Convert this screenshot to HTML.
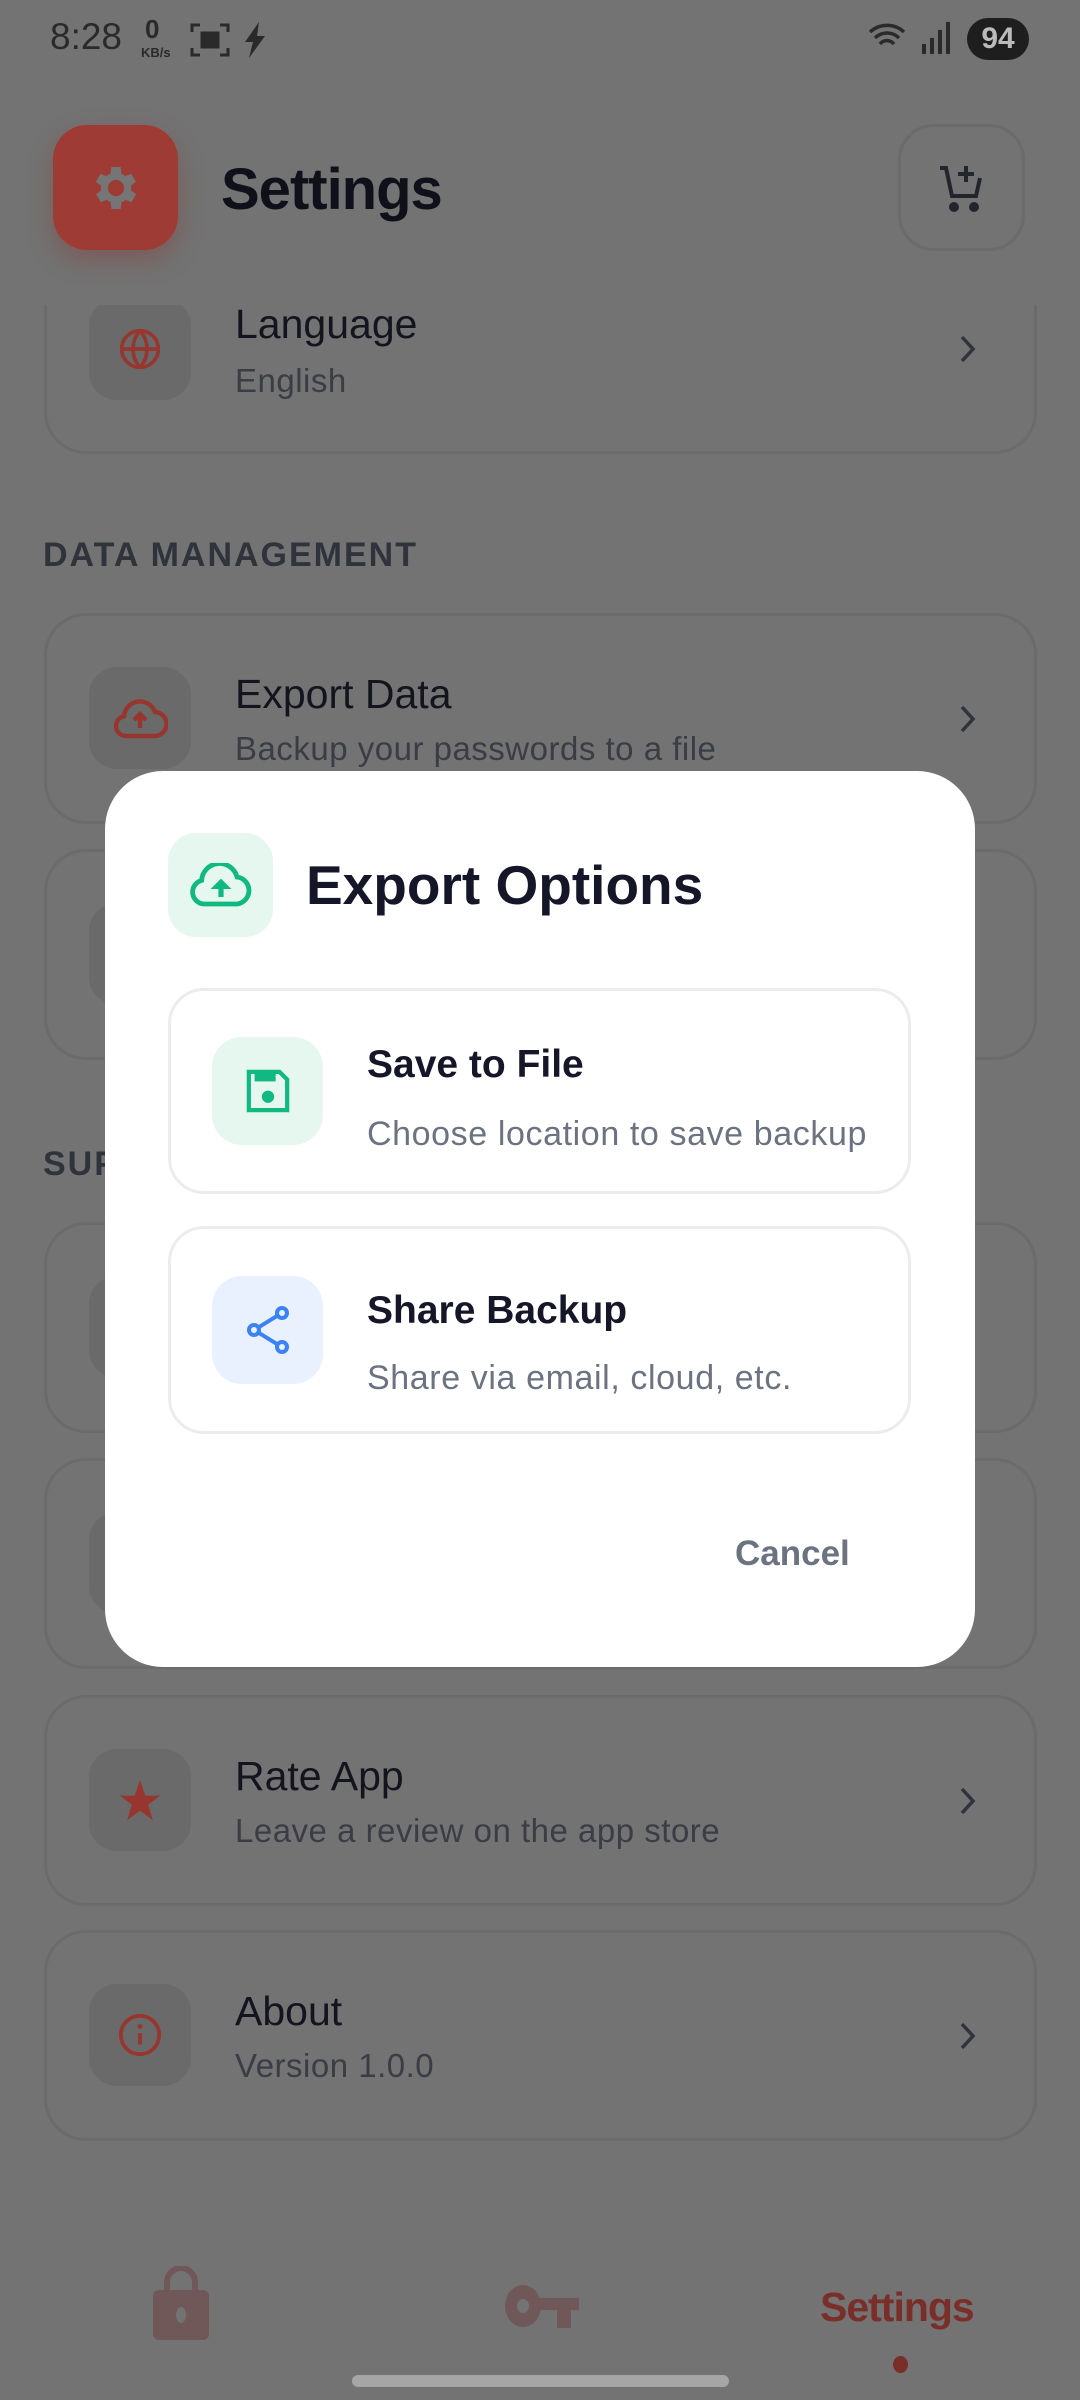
<!DOCTYPE html>
<html><head><meta charset="utf-8"><style>
*{margin:0;padding:0;box-sizing:border-box}
body{width:1080px;height:2400px;background:#737373;font-family:"Liberation Sans",sans-serif;position:relative;overflow:hidden}
.abs{position:absolute}
.card{position:absolute;left:44px;width:993px;height:211px;border:3px solid #6b6b6b;border-radius:42px}
.ib{position:absolute;left:42px;top:51px;width:102px;height:102px;border-radius:28px;background:#6a6a6a;display:flex;align-items:center;justify-content:center}
.t{position:absolute;left:188px;top:55px;font-size:41px;color:#14141e}
.s{position:absolute;left:188px;top:114px;font-size:33px;color:#3a3d45;letter-spacing:0.5px}
.chev{position:absolute;right:56px;top:88px}
.sec{position:absolute;left:43px;font-size:34px;font-weight:bold;color:#2f333b;letter-spacing:2px}
</style></head><body>
<!-- status bar -->
<div class="abs" style="left:50px;top:16px;font-size:37px;color:#2a2a2a">8:28</div>
<div class="abs" style="left:145px;top:14px;font-size:26px;color:#2a2a2a;font-weight:bold">0</div>
<div class="abs" style="left:141px;top:45px;font-size:13px;color:#2a2a2a;font-weight:bold">KB/s</div>
<svg class="abs" style="left:190px;top:22px" width="40" height="36" viewBox="0 0 40 36" fill="none" stroke="#2a2a2a" stroke-width="3"><path d="M2 10V3h8M30 3h8v7M38 26v7h-8M10 33H2v-7"/><rect x="12" y="11" width="16" height="14" fill="#2a2a2a"/></svg>
<svg class="abs" style="left:243px;top:22px" width="24" height="36" viewBox="0 0 24 36"><path d="M16 0L2 20h8L6 36 22 14h-8z" fill="#2a2a2a"/></svg>
<svg class="abs" style="left:868px;top:20px" width="40" height="36" viewBox="0 0 40 36" fill="none" stroke="#2a2a2a" stroke-width="3.5"><path d="M2 12a25 25 0 0 1 34 0M7 18a17 17 0 0 1 24 0M12 24a9 9 0 0 1 14 0"/></svg>
<svg class="abs" style="left:920px;top:22px" width="32" height="32" viewBox="0 0 32 32" fill="#2a2a2a"><rect x="2" y="22" width="4" height="10"/><rect x="10" y="16" width="4" height="16"/><rect x="18" y="8" width="4" height="24"/><rect x="26" y="0" width="4" height="32"/></svg>
<div class="abs" style="left:967px;top:18px;width:62px;height:42px;border-radius:21px;background:#1e1e1e;color:#bbb;font-size:30px;font-weight:bold;text-align:center;line-height:42px">94</div>

<!-- language card (behind header) -->
<div class="card" style="top:243px"><div class="ib" style="top:52px"><svg width="44" height="44" viewBox="0 0 24 24" fill="none" stroke="#96362f" stroke-width="2"><circle cx="12" cy="12" r="10"/><path d="M2 12h20M12 2a15 15 0 0 1 0 20M12 2a15 15 0 0 0 0 20"/></svg></div>
<div class="t" style="top:55px">Language</div><div class="s" style="top:116px">English</div>
<svg class="chev" width="20" height="30" viewBox="0 0 20 30" fill="none" stroke="#2f333b" stroke-width="3.5"><path d="M4 3l11 12L4 27"/></svg></div>

<!-- header -->
<div class="abs" style="left:0;top:80px;width:1080px;height:225px;background:#737373"></div>
<div class="abs" style="left:53px;top:125px;width:125px;height:125px;border-radius:34px;background:#9e3b35;box-shadow:0 10px 24px rgba(140,45,40,.35);display:flex;align-items:center;justify-content:center">
<svg width="56" height="56" viewBox="0 0 24 24" fill="#757575"><path d="M19.4 13a7.5 7.5 0 0 0 0-2l2.1-1.6-2-3.5-2.5 1a7 7 0 0 0-1.7-1L15 3h-4l-.4 2.9a7 7 0 0 0-1.7 1l-2.5-1-2 3.5L6.6 11a7.5 7.5 0 0 0 0 2l-2.1 1.6 2 3.5 2.5-1a7 7 0 0 0 1.7 1L11 21h4l.4-2.9a7 7 0 0 0 1.7-1l2.5 1 2-3.5zM13 15.5a3.5 3.5 0 1 1 0-7 3.5 3.5 0 0 1 0 7z" transform="translate(-1 0)"/></svg></div>
<div class="abs" style="left:221px;top:156px;font-size:58px;font-weight:bold;color:#0f1019;letter-spacing:-1px">Settings</div>
<div class="abs" style="left:898px;top:124px;width:127px;height:127px;border-radius:36px;border:3px solid #6b6b6b;display:flex;align-items:center;justify-content:center">
<svg width="48" height="52" viewBox="0 0 48 52" fill="none" stroke="#22252c" stroke-width="4"><path d="M2 6h6l6 28h24l4-18"/><path d="M28 4v16M20 12h16"/><circle cx="16" cy="45" r="3" fill="#22252c"/><circle cx="36" cy="45" r="3" fill="#22252c"/></svg></div>

<div class="sec" style="top:536px">DATA MANAGEMENT</div>
<div class="card" style="top:613px"><div class="ib"><svg width="56" height="44" viewBox="0 0 28 22" fill="none" stroke="#96362f" stroke-width="2.2"><path d="M7 20a5 5 0 0 1-1-9.9A8 8 0 0 1 21.5 8 6 6 0 0 1 21 20z"/><path d="M14 16v-6M11 12l3-3 3 3" /></svg></div>
<div class="t">Export Data</div><div class="s">Backup your passwords to a file</div>
<svg class="chev" width="20" height="30" viewBox="0 0 20 30" fill="none" stroke="#2f333b" stroke-width="3.5"><path d="M4 3l11 12L4 27"/></svg></div>
<div class="card" style="top:849px"><div class="ib"></div><div class="t">Import Data</div><div class="s">Restore from a backup file</div></div>
<div class="sec" style="top:1145px">SUPPORT</div>
<div class="card" style="top:1222px"><div class="ib"></div></div>
<div class="card" style="top:1458px"><div class="ib"></div></div>
<div class="card" style="top:1695px"><div class="ib"><svg width="44" height="44" viewBox="0 0 24 24" fill="#96362f"><path d="M12 1l2.9 8.6H23l-6.6 5 2.6 8.4L12 17.8 5 23l2.6-8.4L1 9.6h8.1z"/></svg></div>
<div class="t">Rate App</div><div class="s">Leave a review on the app store</div>
<svg class="chev" width="20" height="30" viewBox="0 0 20 30" fill="none" stroke="#2f333b" stroke-width="3.5"><path d="M4 3l11 12L4 27"/></svg></div>
<div class="card" style="top:1930px"><div class="ib"><svg width="46" height="46" viewBox="0 0 24 24" fill="none" stroke="#96362f" stroke-width="2"><circle cx="12" cy="12" r="10"/><path d="M12 11v6"/><circle cx="12" cy="7.5" r="1.2" fill="#96362f" stroke="none"/></svg></div>
<div class="t">About</div><div class="s">Version 1.0.0</div>
<svg class="chev" width="20" height="30" viewBox="0 0 20 30" fill="none" stroke="#2f333b" stroke-width="3.5"><path d="M4 3l11 12L4 27"/></svg></div>

<!-- bottom nav -->
<svg class="abs" style="left:153px;top:2266px" width="56" height="74" viewBox="0 0 56 74"><path d="M14 26V16a14 14 0 0 1 28 0v10" fill="none" stroke="#705858" stroke-width="6"/><rect x="0" y="24" width="56" height="50" rx="6" fill="#705858"/><ellipse cx="28" cy="49" rx="5" ry="8" fill="#737373"/></svg>
<svg class="abs" style="left:505px;top:2284px" width="74" height="44" viewBox="0 0 74 44"><ellipse cx="18" cy="22" rx="18" ry="21" fill="#705858"/><ellipse cx="18" cy="22" rx="6" ry="7" fill="#737373"/><rect x="30" y="14" width="44" height="12" fill="#705858"/><rect x="52" y="20" width="14" height="24" fill="#705858"/></svg>
<div class="abs" style="left:820px;top:2284px;font-size:41px;font-weight:bold;color:#7a2e29;letter-spacing:-1px">Settings</div>
<div class="abs" style="left:893px;top:2356px;width:15px;height:17px;border-radius:50%;background:#7a2e29"></div>
<div class="abs" style="left:352px;top:2375px;width:377px;height:12px;border-radius:6px;background:#a6a6a6"></div>

<!-- dialog -->
<div class="abs" style="left:105px;top:771px;width:870px;height:896px;background:#fff;border-radius:58px">
<div class="abs" style="left:63px;top:62px;width:105px;height:104px;border-radius:28px;background:#e6f7f0;display:flex;align-items:center;justify-content:center">
<svg width="66" height="44" viewBox="0 0 33 22" fill="none" stroke="#10b981" stroke-width="2.4"><path d="M8 20.5a6 6 0 0 1-1.2-11.8A9 9 0 0 1 24.5 7a6.8 6.8 0 0 1 0 13.5z"/><path d="M16.5 17v-6" stroke-width="2.6"/><path d="M12.5 12.5l4-4 4 4z" fill="#10b981" stroke-width="1"/></svg></div>
<div class="abs" style="left:201px;top:82px;font-size:55px;font-weight:bold;color:#161629">Export Options</div>
<div class="abs" style="left:63px;top:217px;width:743px;height:206px;border:3px solid #ececef;border-radius:36px">
<div class="abs" style="left:41px;top:46px;width:111px;height:108px;border-radius:30px;background:#e6f7f0;display:flex;align-items:center;justify-content:center">
<svg width="46" height="46" viewBox="0 0 24 24" fill="none" stroke="#10b981" stroke-width="2.2"><path d="M2 2h16l4 4v16H2z"/><rect x="5" y="3" width="11" height="4" fill="#10b981" stroke="none"/><circle cx="12" cy="15" r="3.2" fill="#10b981" stroke="none"/></svg></div>
<div class="abs" style="left:196px;top:52px;font-size:39px;font-weight:bold;color:#161629">Save to File</div>
<div class="abs" style="left:196px;top:124px;font-size:34px;color:#6b7280;letter-spacing:0.6px">Choose location to save backup</div></div>
<div class="abs" style="left:63px;top:455px;width:743px;height:208px;border:3px solid #ececef;border-radius:36px">
<div class="abs" style="left:41px;top:47px;width:111px;height:108px;border-radius:30px;background:#eaf1fe;display:flex;align-items:center;justify-content:center">
<svg width="48" height="50" viewBox="0 0 24 25" fill="none" stroke="#3b82f6" stroke-width="2"><circle cx="19" cy="4" r="2.5"/><circle cx="5" cy="12.5" r="2.5"/><circle cx="19" cy="21" r="2.5"/><path d="M7.2 11.2l9.6-5.9M7.2 13.8l9.6 5.9"/></svg></div>
<div class="abs" style="left:196px;top:60px;font-size:39px;font-weight:bold;color:#161629">Share Backup</div>
<div class="abs" style="left:196px;top:130px;font-size:34px;color:#6b7280;letter-spacing:0.6px">Share via email, cloud, etc.</div></div>
<div class="abs" style="left:630px;top:763px;font-size:35px;font-weight:bold;color:#6b7280">Cancel</div>
</div>
</body></html>
